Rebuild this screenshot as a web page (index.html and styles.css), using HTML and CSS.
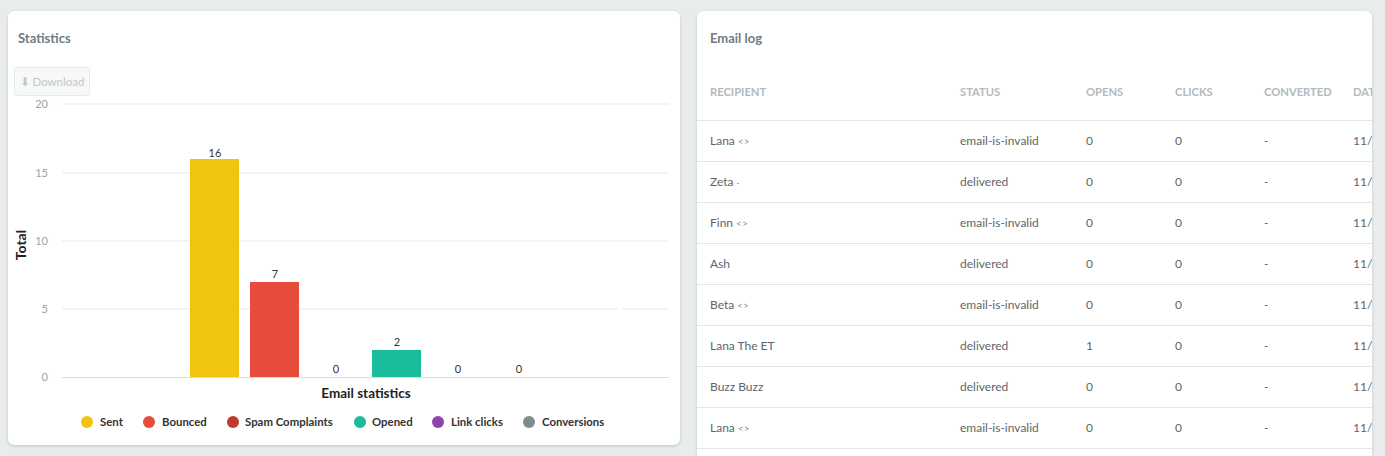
FILE: index.html
```
<!DOCTYPE html>
<html lang="en">
  <head>
    <meta charset="UTF-8" />
    <meta name="viewport" content="width=device-width, initial-scale=1.0" />
    <title>Email statistics</title>
    <link rel="stylesheet" href="styles.css">
  </head>

  <body>
    <div class="panels">
      <div class="card stats">
        <h3 class="card__title">Statistics</h3>
        <button class="btn-download">&#11015; Download</button>

        <svg class="chart" width="672" height="349" viewBox="0 0 672 349">
          <g class="grid">
            <line x1="54" y1="8" x2="661" y2="8" />
            <line x1="54" y1="77" x2="661" y2="77" />
            <line x1="54" y1="145" x2="661" y2="145" />
            <line x1="54" y1="213" x2="610" y2="213" />
            <line x1="615" y1="213" x2="661" y2="213" />
            <line class="base" x1="54" y1="281.5" x2="661" y2="281.5" />
          </g>
          <g class="ticks">
            <text x="40" y="12">20</text>
            <text x="40" y="81">15</text>
            <text x="40" y="149">10</text>
            <text x="40" y="217">5</text>
            <text x="40" y="285">0</text>
          </g>

          <rect x="182" y="63" width="49" height="218" fill="#f1c40f" />
          <rect x="242" y="186" width="49" height="95" fill="#e74c3c" />
          <rect x="364" y="254" width="49" height="27" fill="#1abc9c" />

          <g class="values">
            <text x="207" y="61">16</text>
            <text x="267" y="182">7</text>
            <text x="328" y="277">0</text>
            <text x="389" y="250">2</text>
            <text x="450" y="277">0</text>
            <text x="511" y="277">0</text>
          </g>

          <text class="axis-title" transform="translate(18 149) rotate(-90)">Total</text>
          <text class="axis-title axis-title--x" x="358" y="302">Email statistics</text>

          <g class="legend">
            <circle cx="79" cy="326" r="6" fill="#f1c40f" />
            <text x="92" y="330">Sent</text>
            <circle cx="141" cy="326" r="6" fill="#e74c3c" />
            <text x="154" y="330">Bounced</text>
            <circle cx="225" cy="326" r="6" fill="#c0392b" />
            <text x="237" y="330">Spam Complaints</text>
            <circle cx="352" cy="326" r="6" fill="#1abc9c" />
            <text x="364" y="330">Opened</text>
            <circle cx="430" cy="326" r="6" fill="#8e44ad" />
            <text x="443" y="330">Link clicks</text>
            <circle cx="521" cy="326" r="6" fill="#7f8c8d" />
            <text x="534" y="330">Conversions</text>
          </g>
        </svg>
      </div>

      <div class="card log">
        <h3 class="card__title">Email log</h3>
        <div class="table-wrap">
          <table class="log-table">
            <colgroup>
              <col style="width: 250px" />
              <col style="width: 126px" />
              <col style="width: 89px" />
              <col style="width: 89px" />
              <col style="width: 89px" />
              <col style="width: 120px" />
            </colgroup>
            <thead>
              <tr>
                <th>Recipient</th>
                <th>Status</th>
                <th>Opens</th>
                <th>Clicks</th>
                <th>Converted</th>
                <th>Date</th>
              </tr>
            </thead>
            <tbody>
              <tr><td>Lana <span class="addr">&lt;&gt;</span></td><td>email-is-invalid</td><td>0</td><td>0</td><td>-</td><td>11/22/2021</td></tr>
              <tr><td>Zeta <span class="addr">&middot;</span></td><td>delivered</td><td>0</td><td>0</td><td>-</td><td>11/22/2021</td></tr>
              <tr><td>Finn <span class="addr">&lt;&gt;</span></td><td>email-is-invalid</td><td>0</td><td>0</td><td>-</td><td>11/22/2021</td></tr>
              <tr><td>Ash</td><td>delivered</td><td>0</td><td>0</td><td>-</td><td>11/22/2021</td></tr>
              <tr><td>Beta <span class="addr">&lt;&gt;</span></td><td>email-is-invalid</td><td>0</td><td>0</td><td>-</td><td>11/22/2021</td></tr>
              <tr><td>Lana The ET</td><td>delivered</td><td>1</td><td>0</td><td>-</td><td>11/22/2021</td></tr>
              <tr><td>Buzz Buzz</td><td>delivered</td><td>0</td><td>0</td><td>-</td><td>11/22/2021</td></tr>
              <tr><td>Lana <span class="addr">&lt;&gt;</span></td><td>email-is-invalid</td><td>0</td><td>0</td><td>-</td><td>11/22/2021</td></tr>
              <tr><td>Zeta</td><td>delivered</td><td>0</td><td>0</td><td>-</td><td>11/22/2021</td></tr>
            </tbody>
          </table>
        </div>
      </div>
    </div>
  </body>
</html>
```

FILE: styles.css
```
* {
  margin: 0;
  padding: 0;
  box-sizing: border-box;
}

body {
  background: #e9eced;
  font-family: Lato, "Open Sans", "Liberation Sans", sans-serif;
  color: #333;
  overflow: hidden;
}

.panels {
  display: grid;
  grid-template-columns: 672px 675px;
  column-gap: 17px;
  padding: 11px 0 0 8px;
  align-items: start;
}

.card {
  background: #fff;
  border-radius: 6px;
  box-shadow: 0 1px 3px rgba(0, 0, 0, 0.18);
}

.card__title {
  font-size: 13px;
  font-weight: 700;
  line-height: 16px;
  color: #6f7c83;
}

/* statistics */

.stats {
  height: 434px;
  padding-top: 19px;
}

.stats .card__title {
  padding-left: 10px;
}

.btn-download {
  display: block;
  margin: 21px 0 0 6px;
  width: 76px;
  height: 29px;
  border: 1px solid #e6e8e9;
  border-radius: 3px;
  background: #f7f8f8;
  color: #c3c7c9;
  font-family: Lato, "Open Sans", sans-serif;
  font-size: 11.5px;
  text-align: center;
}

.chart {
  display: block;
}

.grid line {
  stroke: #e7e9ea;
  stroke-width: 1;
}

.grid line.base {
  stroke: #d8d9ee;
}

.ticks text {
  font-size: 11px;
  fill: #9da2a6;
  text-anchor: end;
}

.values text {
  font-size: 11px;
  fill: #333;
  text-anchor: middle;
}

.axis-title {
  font-size: 14px;
  font-weight: 700;
  fill: #222;
  text-anchor: middle;
}

.axis-title--x {
  font-size: 13.5px;
}

.legend text {
  font-size: 11.4px;
  font-weight: 700;
  fill: #333;
}

/* email log */

.log {
  height: 460px;
  padding-top: 19px;
  overflow: hidden;
}

.log .card__title {
  padding-left: 13px;
}

.table-wrap {
  margin-top: 18px;
  overflow: hidden;
}

.log-table {
  table-layout: fixed;
  border-collapse: collapse;
  width: 763px;
}

.log-table th {
  height: 56px;
  padding-left: 13px;
  text-align: left;
  vertical-align: middle;
  font-size: 11.2px;
  font-weight: 700;
  text-transform: uppercase;
  color: #b1babe;
  border-bottom: 1px solid #e3e6e8;
  white-space: nowrap;
}

.log-table td {
  height: 41px;
  padding-left: 13px;
  font-size: 12px;
  color: #5e6569;
  border-bottom: 1px solid #e3e6e8;
  white-space: nowrap;
}

.addr {
  font-size: 10px;
  color: #8a9094;
}
```
